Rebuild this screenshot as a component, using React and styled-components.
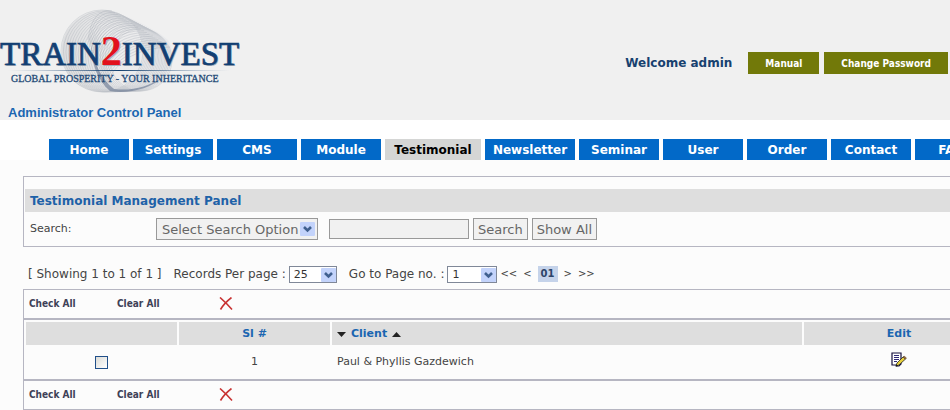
import React from "react";
import styled, { createGlobalStyle, css } from "styled-components";

const GlobalStyle = createGlobalStyle`
  * { box-sizing: border-box; }
  body {
    margin: 0;
    background: #fcfcfc;
    color: #444;
    font: 11px/16px Verdana, "DejaVu Sans", sans-serif;
  }
  button, input, select { font-family: inherit; }
`;

const Page = styled.div`
  overflow: hidden;
`;

const Header = styled.header`
  display: flex;
  justify-content: space-between;
  align-items: flex-start;
  height: 120px;
  padding-right: 2px;
  background: #f0f0f0;
`;

const Brand = styled.div`
  display: flex;
  flex-direction: column;
`;

const LogoArt = styled.svg`
  display: block;
  font-family: "Liberation Serif", serif;
`;

const PanelTitle = styled.h1`
  margin: 5px 0 0 8px;
  font: bold 13px/16px "Liberation Sans", Arial, sans-serif;
  color: #1b66b1;
`;

const Account = styled.div`
  display: flex;
  align-items: center;
  gap: 5px;
  margin-top: 52px;
`;

const Welcome = styled.span`
  margin-right: 11px;
  font-size: 12px;
  font-weight: bold;
  color: #17416f;
`;

const AccountLink = styled.a`
  padding: 4px 17px 2px;
  background: #727909;
  color: #fff;
  font: bold 10px/16px "DejaVu Sans Condensed", "DejaVu Sans", sans-serif;
  text-decoration: none;
`;

const Nav = styled.nav`
  display: flex;
  gap: 4px;
  padding: 19px 0 0 49px;
  background: #fff;
`;

const Tab = styled.a`
  flex: 0 0 ${(p) => p.$width}px;
  padding-top: 2px;
  background: ${(p) => (p.$active ? "#d5d6d5" : "#0269c8")};
  color: ${(p) => (p.$active ? "#000" : "#fff")};
  font-size: 12px;
  font-weight: bold;
  line-height: 19px;
  text-align: center;
  text-decoration: none;
`;

const Content = styled.main`
  min-width: 974px;
  margin: 16px 0 0 23px;
`;

const Frame = styled.section`
  border: 1px solid #b6b6c2;
`;

const SearchFrame = styled(Frame)`
  padding: 12px 1px 0;
`;

const Banner = styled.h2`
  margin: 0;
  padding: 1px 5px 0;
  background: #dedede;
  color: #1e62a8;
  font-size: 12px;
  line-height: 22px;
`;

const SearchForm = styled.form`
  display: flex;
  align-items: center;
  height: 34px;
  padding-left: 5px;
`;

const SearchLabel = styled.label`
  flex: 0 0 126px;
`;

const fieldBox = css`
  height: 22px;
  border: 1px solid #999;
  border-radius: 0;
  background: #f1f1f1;
  color: #666;
  font-size: 13px;
`;

const SearchInput = styled.input`
  ${fieldBox}
  width: 140px;
  height: 20px;
  margin: 0 4px 0 11px;
`;

const SearchButton = styled.button`
  ${fieldBox}
  margin-right: 4px;
  padding: 0 4px;
`;

const SelectBox = styled.span`
  position: relative;
  display: inline-flex;
  svg {
    position: absolute;
    right: ${(p) => (p.$wide ? 3 : 1)}px;
    top: ${(p) => (p.$wide ? 4 : 2)}px;
    pointer-events: none;
  }
`;

const SearchSelect = styled.select`
  ${fieldBox}
  appearance: none;
  width: 162px;
  padding: 0 5px;
`;

const PageSelect = styled.select`
  appearance: none;
  width: ${(p) => p.$width}px;
  height: 17px;
  padding: 0 4px;
  border: 1px solid #808898;
  border-radius: 0;
  background: #fff;
  color: #333;
  font-size: 11px;
`;

const Pager = styled.div`
  display: flex;
  align-items: center;
  height: 42px;
  padding: 12px 0 0 5px;
  font-size: 12px;
`;

const PagerField = styled.label`
  display: flex;
  align-items: center;
  gap: 3px;
  margin-left: 12px;
`;

const PageLinks = styled.nav`
  display: flex;
  align-items: center;
  gap: 6px;
  margin-left: 3px;
`;

const PageLink = styled.a`
  color: #444;
  font-size: 10px;
  text-decoration: none;
`;

const CurrentPage = styled.span`
  padding: 0 3px;
  background: #c5d3ea;
  color: #2d4468;
  font-size: 10px;
  font-weight: bold;
`;

const ActionBar = styled.div`
  display: grid;
  grid-template-columns: 88px 102px auto;
  justify-content: start;
  align-items: center;
  height: 28px;
  padding-left: 5px;
`;

const TextButton = styled.button`
  padding: 0;
  border: 0;
  background: none;
  color: #3e4157;
  font: bold 10px/16px "DejaVu Sans Condensed", "DejaVu Sans", sans-serif;
  text-align: left;
`;

const IconButton = styled.button`
  display: inline-flex;
  padding: 0;
  border: 0;
  background: none;
`;

const Records = styled.table`
  width: 100%;
  table-layout: fixed;
  border-collapse: separate;
  border-spacing: 2px;
  border-block: 2px solid #b6b6c2;
`;

const HeadCell = styled.th`
  width: ${(p) => p.$width};
  height: 23px;
  padding: 1px 5px 0;
  background: #dedede;
  color: #1b66b1;
  font-size: 11px;
  text-align: ${(p) => (p.$left ? "left" : "center")};
`;

const Cell = styled.td`
  height: 30px;
  padding: 0 5px;
  text-align: ${(p) => (p.$left ? "left" : "center")};
`;

const SortLabel = styled.span`
  display: flex;
  align-items: center;
  gap: 5px;
`;

const RowCheck = styled.input`
  appearance: none;
  display: inline-block;
  width: 13px;
  height: 13px;
  margin: 0;
  border: 1px solid #21508a;
  background: linear-gradient(135deg, #dcdcd7, #fff);
  vertical-align: middle;
  &:checked { background: #21508a; }
`;

const rings = Array.from({ length: 21 }, (_, i) => i / 20);

function Logo() {
  return (
    <LogoArt width="240" height="100" viewBox="0 0 240 100" role="img" aria-label="Train2Invest">
      <defs>
        <linearGradient id="sheen" x1="0" y1="0" x2="1" y2="0">
          <stop offset="0" stopColor="#c9cbce" />
          <stop offset="0.5" stopColor="#e8e8ea" />
          <stop offset="1" stopColor="#e2e4e8" />
        </linearGradient>
        <linearGradient id="rule" x1="0" y1="0" x2="1" y2="0">
          <stop offset="0" stopColor="#7890ac" stopOpacity="0" />
          <stop offset="0.5" stopColor="#12406f" />
          <stop offset="1" stopColor="#7890ac" stopOpacity="0" />
        </linearGradient>
      </defs>
      <path d="M62 55C60 30 78 10 106 10C118 11 155 28 168 40C177 54 170 76 150 88C134 93 115 94 100 92C78 90 64 76 62 55Z" fill="url(#sheen)" opacity="0.5" />
      <g fill="none" stroke="#8b929e" strokeWidth="0.5" opacity="0.45">
        {rings.map((t) => (
          <ellipse key={t} cx={102 + 39 * t} cy={51 + 9 * t} rx={41 - 10 * t} ry={41 - 10 * t} />
        ))}
      </g>
      <g fill="none" stroke="#8a92a0" strokeWidth="0.4" opacity="0.6">
        {rings.map((t) => (
          <path key={t} d={`M${88 + 18 * t} ${40 + 44 * t}Q${92 + 30 * t} ${8 + 40 * t} ${112 + 58 * t} ${11 + 36 * t}`} />
        ))}
      </g>
      <path d="M91 45C92 64 97 80 110 91C126 94 150 90 164 76C148 88 130 91 114 89C101 79 94 62 91 45Z" fill="#65758f" opacity="0.6" />
      <text x="1" y="66" fontSize="33" fill="#a6aeb9">
        TRAIN<tspan fontSize="42" fontWeight="bold">2</tspan>INVEST
      </text>
      <text x="0" y="65" fontSize="33" fill="#123f73" stroke="#123f73" strokeWidth="0.7">
        TRAIN<tspan fontSize="42" fontWeight="bold" fill="#e2111c" stroke="none">2</tspan>INVEST
      </text>
      <rect x="8" y="70" width="222" height="1" fill="url(#rule)" />
      <text x="11" y="82" fontSize="10" fill="#234a77" stroke="#234a77" strokeWidth="0.3">GLOBAL PROSPERITY - YOUR INHERITANCE</text>
    </LogoArt>
  );
}

function Arrow() {
  return (
    <svg width="15" height="14" viewBox="0 0 15 14" aria-hidden="true">
      <rect width="15" height="14" rx="1" fill="#c3d3fb" />
      <path d="M4 5L7.5 8.5L11 5" fill="none" stroke="#40608f" strokeWidth="2.6" />
    </svg>
  );
}

function DeleteIcon() {
  return (
    <svg width="14" height="14" viewBox="0 0 14 14" aria-hidden="true">
      <path d="M1 0.500C5 4 9 8 13 12.500M12.500 0.500C8 4 4 8 1.500 12.500" fill="none" stroke="#c83232" strokeWidth="1.600" />
    </svg>
  );
}

function EditIcon() {
  return (
    <svg width="16" height="16" viewBox="0 0 16 16" aria-hidden="true">
      <path d="M1 1H10V12L8 14H6L5 13H1Z" fill="#fff" stroke="#15103c" strokeWidth="1.200" />
      <path d="M3 3.500H8M3 5.500H8M3 7.500H8M3 9.500H6" stroke="#302a75" />
      <path d="M5 14L6 11L12 5L14.500 7L8 13Z" fill="#e6cf3c" stroke="#222" strokeWidth="0.800" />
      <path d="M12 5L13 4L15.500 6L14.500 7Z" fill="#b0683c" stroke="#442" strokeWidth="0.500" />
      <path d="M4.500 14.800L5.500 12.500L7 14Z" fill="#111" />
    </svg>
  );
}

function SortMark({ up }) {
  return (
    <svg width="9" height="5" viewBox="0 0 9 5" aria-hidden="true">
      <path d={up ? "M0 5L4.500 0L9 5Z" : "M0 0H9L4.500 5Z"} fill="#222" />
    </svg>
  );
}

function Actions() {
  return (
    <ActionBar>
      <TextButton type="button">Check All</TextButton>
      <TextButton type="button">Clear All</TextButton>
      <IconButton type="button" aria-label="Delete"><DeleteIcon /></IconButton>
    </ActionBar>
  );
}

const tabs = [
  { name: "Home" },
  { name: "Settings" },
  { name: "CMS" },
  { name: "Module" },
  { name: "Testimonial", width: 96 },
  { name: "Newsletter", width: 90 },
  { name: "Seminar" },
  { name: "User" },
  { name: "Order" },
  { name: "Contact" },
  { name: "FAQs" },
];

export default function App() {
  return (
    <Page>
      <GlobalStyle />
      <Header>
        <Brand>
          <Logo />
          <PanelTitle>Administrator Control Panel</PanelTitle>
        </Brand>
        <Account>
          <Welcome>Welcome admin</Welcome>
          <AccountLink href="#manual">Manual</AccountLink>
          <AccountLink href="#password">Change Password</AccountLink>
        </Account>
      </Header>
      <Nav>
        {tabs.map(({ name, width = 80 }) => (
          <Tab key={name} href={`#${name}`} $width={width} $active={name === "Testimonial"}>{name}</Tab>
        ))}
      </Nav>
      <Content>
        <SearchFrame>
          <Banner>Testimonial Management Panel</Banner>
          <SearchForm>
            <SearchLabel htmlFor="field">Search:</SearchLabel>
            <SelectBox $wide>
              <SearchSelect id="field"><option>Select Search Option</option></SearchSelect>
              <Arrow />
            </SelectBox>
            <SearchInput type="text" aria-label="Search text" />
            <SearchButton type="button">Search</SearchButton>
            <SearchButton type="button">Show All</SearchButton>
          </SearchForm>
        </SearchFrame>
        <Pager>
          <span>[ Showing 1 to 1 of 1 ]</span>
          <PagerField>
            Records Per page :
            <SelectBox><PageSelect $width={48}><option>25</option></PageSelect><Arrow /></SelectBox>
          </PagerField>
          <PagerField>
            Go to Page no. :
            <SelectBox><PageSelect $width={50}><option>1</option></PageSelect><Arrow /></SelectBox>
          </PagerField>
          <PageLinks aria-label="Pages">
            <PageLink href="#first">&lt;&lt;</PageLink>
            <PageLink href="#previous">&lt;</PageLink>
            <CurrentPage>01</CurrentPage>
            <PageLink href="#next">&gt;</PageLink>
            <PageLink href="#last">&gt;&gt;</PageLink>
          </PageLinks>
        </Pager>
        <Frame>
          <Actions />
          <Records>
            <thead>
              <tr>
                <HeadCell $width="151px" aria-label="Select" />
                <HeadCell $width="151px">Sl #</HeadCell>
                <HeadCell $left>
                  <SortLabel><SortMark />Client<SortMark up /></SortLabel>
                </HeadCell>
                <HeadCell $width="190px">Edit</HeadCell>
              </tr>
            </thead>
            <tbody>
              <tr>
                <Cell><RowCheck type="checkbox" aria-label="Select Paul &amp; Phyllis Gazdewich" /></Cell>
                <Cell>1</Cell>
                <Cell $left>Paul &amp; Phyllis Gazdewich</Cell>
                <Cell><IconButton type="button" aria-label="Edit"><EditIcon /></IconButton></Cell>
              </tr>
            </tbody>
          </Records>
          <Actions />
        </Frame>
      </Content>
    </Page>
  );
}
